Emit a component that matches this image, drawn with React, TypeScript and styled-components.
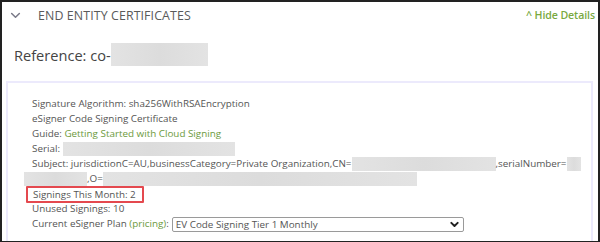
import { createGlobalStyle, styled } from "styled-components";

const Global = createGlobalStyle`
  html, body { margin: 0; padding: 0; background: #fff; }
  body { font-family: "Open Sans", "Noto Sans", sans-serif; }
`;

const Frame = styled.div`
  width: 600px;
  height: 242px;
  box-sizing: border-box;
  border: 2px solid #222;
  border-bottom-width: 1px;
  overflow: hidden;
  background: #fff;
  padding: 0 5px 0 2px;
`;

const Header = styled.div`
  display: flex;
  align-items: center;
  height: 26px;
  padding: 0 0 0 6px;
`;

const Title = styled.div`
  flex: 1;
  display: flex;
  align-items: center;
  gap: 17px;
  font-size: 12.4px;
  color: #5a5a5a;
  letter-spacing: 0.1px;
`;

const HideLink = styled.a`
  font-size: 10.6px;
  color: #79a93f;
  font-weight: 600;
  letter-spacing: -0.1px;
  margin-right: -2px;
`;

const Reference = styled.div`
  display: flex;
  align-items: center;
  height: 53px;
  padding-left: 10px;
  font-size: 14.6px;
  color: #444;
`;

const Blur = styled.span<{ $w: number; $h?: number }>`
  display: inline-block;
  width: ${(p) => p.$w}px;
  height: ${(p) => p.$h ?? 14}px;
  background: linear-gradient(90deg, #e3e3e3, #dcdcdc 50%, #e3e3e3);
  vertical-align: middle;
`;

const Panel = styled.div`
  margin-left: 2px;
  border: 2px solid #eceafc;
  border-bottom: none;
  padding: 13px 10px 20px 24px;
  font-size: 9.85px;
  color: #555;
  height: 200px;
`;

const Line = styled.div`
  height: 15px;
  line-height: 15px;
  white-space: nowrap;
`;

const Green = styled.span`
  color: #6c9a3c;
`;

const Boxed = styled.span`
  display: inline-block;
  margin-left: -6px;
  padding: 0 6px 0 5px;
  line-height: 13px;
  border: 2px solid #e4494f;
  border-radius: 1px;
`;

const Indent = styled.span`
  margin-left: -8px;
`;

const Select = styled.span`
  display: inline-flex;
  align-items: center;
  justify-content: space-between;
  width: 292px;
  height: 15px;
  box-sizing: border-box;
  border: 1px solid #9a9a9a;
  border-radius: 2px;
  padding: 0 4px 0 3px;
  margin-left: 3px;
  vertical-align: middle;
  color: #555;
`;

const Chevron = ({ size = 10, stroke = 2 }: { size?: number; stroke?: number }) => (
  <svg width={size} height={size} viewBox="0 0 10 10" fill="none">
    <path d="M1.5 3.2 L5 6.6 L8.5 3.2" stroke="currentColor" strokeWidth={stroke} strokeLinecap="round" strokeLinejoin="round" />
  </svg>
);

export default function App() {
  return (
    <>
      <Global />
      <Frame>
        <Header>
          <Title>
            <span style={{ color: "#7a7a88", display: "flex" }}>
              <Chevron size={11} stroke={1.4} />
            </span>
            END ENTITY CERTIFICATES
          </Title>
          <HideLink>^ Hide Details</HideLink>
        </Header>
        <Reference>
          Reference: co-
          <Blur $w={97} $h={23} />
        </Reference>
        <Panel>
          <Line>Signature Algorithm: sha256WithRSAEncryption</Line>
          <Line>eSigner Code Signing Certificate</Line>
          <Line>
            Guide: <Green>Getting Started with Cloud Signing</Green>
          </Line>
          <Line>
            Serial: <Blur $w={172} />
          </Line>
          <Line>
            Subject: jurisdictionC=AU,businessCategory=Private Organization,CN=
            <Blur $w={144} />
            ,serialNumber=
            <Blur $w={14} />
          </Line>
          <Line>
            <Indent>
              <Blur $w={63} />
              ,O=
              <Blur $w={314} />
            </Indent>
          </Line>
          <Line>
            <Boxed>Signings This Month: 2</Boxed>
          </Line>
          <Line>Unused Signings: 10</Line>
          <Line>
            Current eSigner Plan <Green>(pricing)</Green>:
            <Select>
              EV Code Signing Tier 1 Monthly
              <span style={{ color: "#222", display: "flex" }}>
                <Chevron size={9} stroke={2.2} />
              </span>
            </Select>
          </Line>
        </Panel>
      </Frame>
    </>
  );
}
